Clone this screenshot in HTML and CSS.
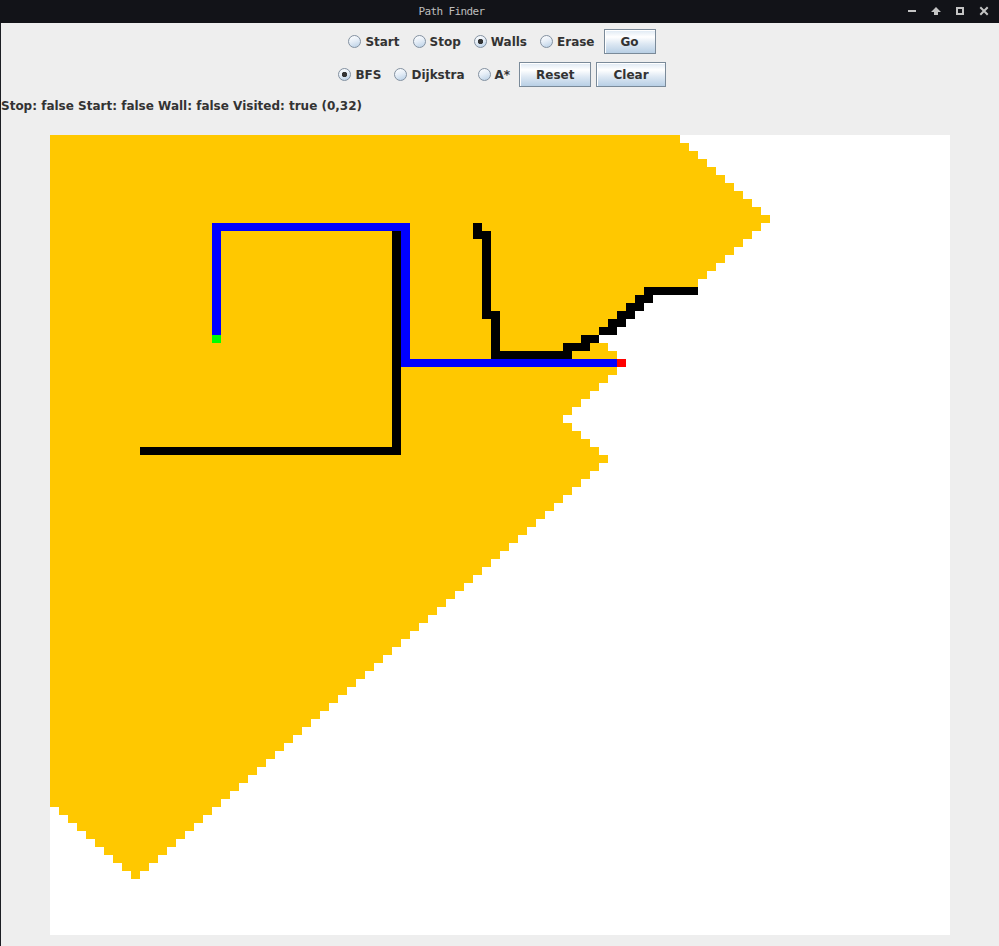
FILE: index.html
```html
<!DOCTYPE html>
<html lang="en">
<head>
<meta charset="utf-8">
<title>Path Finder</title>
<link rel="stylesheet" href="styles.css">
</head>
<body>
<div class="titlebar">
  <div class="title">Path Finder</div>
  <div class="wm-controls">
    <svg width="99" height="23" viewBox="0 0 99 23" aria-hidden="true">
      <rect x="8" y="10" width="8" height="2" fill="#c4c4c4"/>
      <polygon points="36,7 41,12 38,12 38,15 34,15 34,12 31,12" fill="#c4c4c4"/>
      <rect x="57" y="8" width="6" height="6" fill="none" stroke="#c4c4c4" stroke-width="2"/>
      <path d="M81 8 L87 14 M87 8 L81 14" stroke="#c4c4c4" stroke-width="2" stroke-linecap="square" fill="none"/>
    </svg>
  </div>
</div>
<div class="window">
  <div class="toolbar">
    <div class="row">
      <label class="radio"><input type="radio" name="mode">Start</label>
      <label class="radio"><input type="radio" name="mode">Stop</label>
      <label class="radio"><input type="radio" name="mode" checked>Walls</label>
      <label class="radio"><input type="radio" name="mode">Erase</label>
      <button class="btn">Go</button>
    </div>
    <div class="row">
      <label class="radio"><input type="radio" name="algo" checked>BFS</label>
      <label class="radio"><input type="radio" name="algo">Dijkstra</label>
      <label class="radio"><input type="radio" name="algo">A*</label>
      <button class="btn">Reset</button>
      <button class="btn">Clear</button>
    </div>
  </div>
  <div class="status">Stop: false Start: false Wall: false Visited: true (0,32)</div>
  <canvas class="grid" id="grid" width="900" height="800"></canvas>
</div>
<script src="script.js"></script>
</body>
</html>
```

FILE: styles.css
```css
html, body {
  margin: 0;
  padding: 0;
  background: #eeeeee;
}

body {
  width: 999px;
  height: 946px;
  overflow: hidden;
  font-family: "DejaVu Sans", "Liberation Sans", sans-serif;
}

.titlebar {
  height: 23px;
  background: #121318;
  display: flex;
  align-items: center;
}

.title {
  flex: 1;
  text-align: center;
  color: #bdbdbd;
  font-family: "DejaVu Sans Mono", "Liberation Mono", monospace;
  font-size: 11px;
  letter-spacing: -0.62px;
  line-height: 23px;
  padding-left: 3px;
}

.wm-controls {
  width: 99px;
  height: 23px;
}

.wm-controls svg {
  display: block;
}

.window {
  border-left: 1px solid #1b1d23;
  height: 923px;
}

.toolbar {
  padding-top: 6px;
  display: flex;
  flex-direction: column;
  gap: 8px;
}

.row {
  display: flex;
  justify-content: center;
  align-items: center;
  gap: 5px;
  height: 25px;
}

.radio {
  display: flex;
  align-items: center;
  padding: 0 4px;
  font-size: 12px;
  font-weight: bold;
  color: #333333;
  line-height: 14px;
}

.radio input {
  appearance: none;
  -webkit-appearance: none;
  box-sizing: border-box;
  width: 13px;
  height: 13px;
  margin: 0 4px 0 0;
  border-radius: 50%;
  border: 1px solid #8391a1;
  background: linear-gradient(160deg, #ffffff 0%, #e6eef7 45%, #b8cfe5 100%);
}

.radio input:checked {
  background:
    radial-gradient(circle at 50% 50%, #333333 0, #333333 2.4px, rgba(51,51,51,0) 3px),
    linear-gradient(160deg, #ffffff 0%, #e6eef7 45%, #b8cfe5 100%);
}

.btn {
  box-sizing: border-box;
  height: 25px;
  padding: 0 16px;
  margin: 0;
  border: 1px solid #7a8a99;
  border-radius: 0;
  box-shadow: inset 1px 1px 0 #ffffff;
  background: linear-gradient(#dde8f3 0%, #ffffff 30%, #dde8f3 60%, #b8cfe5 100%);
  font-family: "DejaVu Sans", "Liberation Sans", sans-serif;
  font-size: 12px;
  font-weight: bold;
  color: #333333;
}

.status {
  margin-top: 12px;
  font-size: 12px;
  font-weight: bold;
  line-height: 14px;
  color: #333333;
  white-space: nowrap;
}

.grid {
  display: block;
  margin: 22px 0 0 49px;
  background: #ffffff;
}
```

FILE: script.js
```js
(function () {
  var COLS = 100, ROWS = 100, CW = 9, CH = 8;
  var canvas = document.getElementById('grid');
  var ctx = canvas.getContext('2d');

  var walls = {};
  function wall(c, r) { walls[c + ',' + r] = true; }
  function wallRow(r, c1, c2) { for (var c = c1; c <= c2; c++) wall(c, r); }
  function wallCol(c, r1, r2) { for (var r = r1; r <= r2; r++) wall(c, r); }

  wallCol(38, 12, 39);
  wallRow(39, 10, 38);

  wall(47, 11);
  wallRow(12, 47, 48);
  wallCol(48, 13, 21);
  wallRow(22, 48, 49);
  wallCol(49, 23, 26);
  wallRow(27, 49, 57);
  wallRow(26, 57, 59);
  wallRow(25, 59, 60);
  wallRow(24, 61, 62);
  wallRow(23, 62, 63);
  wallRow(22, 63, 64);
  wallRow(21, 64, 65);
  wallRow(20, 65, 66);
  wallRow(19, 66, 71);

  var start = [18, 25], stop = [63, 28];
  var LIMIT = 76;

  var dist = {};
  var queue = [start];
  dist[start[0] + ',' + start[1]] = 0;
  var head = 0;
  var dirs = [[1, 0], [-1, 0], [0, 1], [0, -1]];
  while (head < queue.length) {
    var cur = queue[head++];
    var d = dist[cur[0] + ',' + cur[1]];
    if (d >= LIMIT) continue;
    for (var i = 0; i < 4; i++) {
      var nc = cur[0] + dirs[i][0], nr = cur[1] + dirs[i][1];
      if (nc < 0 || nr < 0 || nc >= COLS || nr >= ROWS) continue;
      var k = nc + ',' + nr;
      if (walls[k] || dist[k] !== undefined) continue;
      dist[k] = d + 1;
      queue.push([nc, nr]);
    }
  }

  function fill(c, r, color) {
    ctx.fillStyle = color;
    ctx.fillRect(c * CW, r * CH, CW, CH);
  }

  ctx.fillStyle = '#ffffff';
  ctx.fillRect(0, 0, COLS * CW, ROWS * CH);

  Object.keys(dist).forEach(function (k) {
    var p = k.split(',');
    fill(+p[0], +p[1], '#ffc800');
  });

  var path = [];
  var r, c;
  for (r = 24; r >= 11; r--) path.push([18, r]);
  for (c = 19; c <= 39; c++) path.push([c, 11]);
  for (r = 12; r <= 28; r++) path.push([39, r]);
  for (c = 40; c <= 62; c++) path.push([c, 28]);
  path.forEach(function (p) { fill(p[0], p[1], '#0000ff'); });

  Object.keys(walls).forEach(function (k) {
    var p = k.split(',');
    fill(+p[0], +p[1], '#000000');
  });

  fill(start[0], start[1], '#00ff00');
  fill(stop[0], stop[1], '#ff0000');
})();
```
